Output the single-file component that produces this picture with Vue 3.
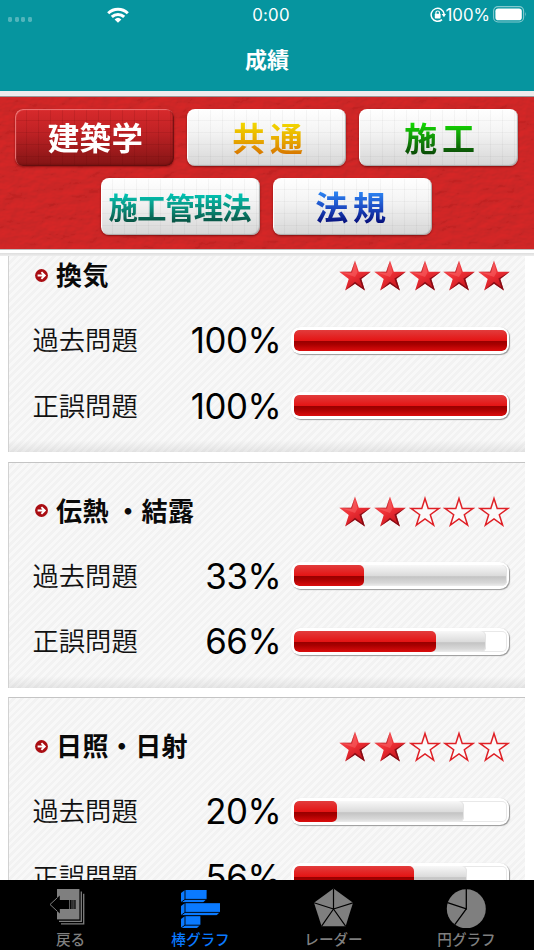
<script setup>
import { ref } from 'vue'

const subjects = ref([
  [
    { id: 1, name: '建築学', color: 'red' },
    { id: 2, name: '共通', color: 'yellow' },
    { id: 3, name: '施工', color: 'green' }
  ],
  [
    { id: 4, name: '施工管理法', color: 'teal' },
    { id: 5, name: '法規', color: 'blue' }
  ]
])

const cards = ref([
  {
    name: '換気',
    stars: 5,
    rows: [
      { label: '過去問題', rate: 100, done: 100 },
      { label: '正誤問題', rate: 100, done: 100 }
    ]
  },
  {
    name: '伝熱 ・結露',
    stars: 2,
    rows: [
      { label: '過去問題', rate: 33, done: 100 },
      { label: '正誤問題', rate: 66.5, done: 90.2 }
    ]
  },
  {
    name: '日照・日射',
    stars: 2,
    rows: [
      { label: '過去問題', rate: 20, done: 80 },
      { label: '正誤問題', rate: 56.2, done: 81.3 }
    ]
  }
])

const tabs = ref([
  { id: 'back', name: '戻る' },
  { id: 'bar', name: '棒グラフ' },
  { id: 'radar', name: 'レーダー' },
  { id: 'pie', name: '円グラフ' }
])
const activeTab = ref('bar')
const activeSubject = ref(1)

const starPath = 'M16 0.4 L19.8 11.7 L31.8 11.7 L22.3 19 L25.9 30.6 L16 23.8 L6.1 30.6 L9.7 19 L0.2 11.7 L12.2 11.7 Z'
</script>

<template>
  <div class="screen">
    <header class="header">
      <div class="status">
        <div class="status-left">
          <span class="dots"><i></i><i></i><i></i><i></i></span>
          <svg class="wifi" width="22" height="16" viewBox="0 0 22 16">
            <g fill="none" stroke="#fff" stroke-width="3">
              <path d="M1.2 6.2 A14 14 0 0 1 20.8 6.2" />
              <path d="M4.8 9.9 A9 9 0 0 1 17.2 9.9" />
            </g>
            <path d="M7.6 12.4 A5 5 0 0 1 14.4 12.4 L11 15.8 Z" fill="#fff" />
          </svg>
        </div>
        <span class="time">0:00</span>
        <div class="status-right">
          <svg width="16" height="16" viewBox="0 0 16 16">
            <path d="M12 12.6 A6.5 6.5 0 1 1 14.1 7" fill="none" stroke="#fff" stroke-width="1.5" />
            <path d="M11.6 7 H16 L14 10.2 Z" fill="#fff" />
            <rect x="4.8" y="6.8" width="5.8" height="4.6" rx="0.6" fill="#fff" />
            <path d="M5.9 7.2 V5.8 a1.8 1.8 0 0 1 3.6 0 V7.2" fill="none" stroke="#fff" stroke-width="1.2" />
          </svg>
          <span class="battery-text">100%</span>
          <svg width="34" height="17" viewBox="0 0 34 17">
            <rect x="0.6" y="0.6" width="30" height="15.4" rx="4.4" fill="none" stroke="#fff" stroke-opacity="0.5" stroke-width="1.1" />
            <rect x="2.4" y="2.4" width="26.4" height="11.8" rx="2.8" fill="#fff" />
            <path d="M32 5.8 Q33.6 8.3 32 10.8 Z" fill="#fff" fill-opacity="0.55" />
          </svg>
        </div>
      </div>
      <h1 class="title">成績</h1>
    </header>

    <section class="subjects">
      <svg class="paper" width="534" height="152">
        <filter id="paper" x="0" y="0" width="100%" height="100%">
          <feTurbulence type="fractalNoise" baseFrequency="0.06 0.1" numOctaves="4" seed="8" result="noise" />
          <feDiffuseLighting in="noise" lighting-color="#cf2527" surfaceScale="1" diffuseConstant="1.14">
            <feDistantLight azimuth="235" elevation="60" />
          </feDiffuseLighting>
        </filter>
        <rect width="534" height="152" filter="url(#paper)" />
      </svg>
      <div v-for="(line, index) in subjects" :key="index" class="subject-line">
        <button
          v-for="subject in line"
          :key="subject.id"
          class="subject"
          :class="[subject.color, subject.id === activeSubject ? 'active' : '']"
          @click="activeSubject = subject.id"
        >
          <span>{{ subject.name }}</span>
        </button>
      </div>
    </section>
    <div class="divider"></div>

    <main class="list">
      <article v-for="card in cards" :key="card.name" class="card">
        <div class="card-head">
          <svg class="bullet" width="13" height="13" viewBox="0 0 13 13">
            <circle cx="6.5" cy="6.5" r="6.4" fill="#a90d12" />
            <path d="M2.6 6.5 H9.4 M6.4 3.1 L9.8 6.5 L6.4 9.9" fill="none" stroke="#fff" stroke-width="1.9" />
          </svg>
          <h2>{{ card.name }}</h2>
          <div class="stars">
            <svg v-for="n in 5" :key="n" width="32" height="31" viewBox="0 0 32 31">
              <template v-if="n <= card.stars">
                <path :d="starPath" fill="url(#star)" />
                <path d="M31.8 11.7 L22.3 19 L25.9 30.6 L16 23.8 L6.1 30.6 L16 21.8 L23.4 27.6 L20.4 18.4 Z" fill="#6e0710" fill-opacity="0.75" />
                <path d="M16 0.4 L12.8 12.6 L0.2 11.7 L12.2 11.7 Z" fill="#8c1a1f" fill-opacity="0.6" />
                <path d="M16 3 L18.6 12.6 L16 17 L4 12.8 L13.2 12.8 Z" fill="#ff8080" fill-opacity="0.35" />
              </template>
              <path v-else d="M16 2.4 L19.2 12.4 L30 12.4 L21.3 18.7 L24.6 29 L16 22.8 L7.4 29 L10.7 18.7 L2 12.4 L12.8 12.4 Z" fill="#fafafa" stroke="#df2026" stroke-width="1.5" />
            </svg>
          </div>
        </div>
        <div v-for="row in card.rows" :key="row.label" class="row">
          <span class="label">{{ row.label }}</span>
          <span class="rate">{{ Math.floor(row.rate) }}%</span>
          <div class="bar">
            <div class="track">
              <div class="done" :style="{ width: row.done + '%' }"></div>
              <div class="fill" :style="{ width: row.rate + '%' }"></div>
            </div>
          </div>
        </div>
      </article>
    </main>

    <nav class="tabs">
      <button
        v-for="tab in tabs"
        :key="tab.id"
        class="tab"
        :class="['tab-' + tab.id, tab.id === activeTab ? 'active-tab' : '']"
        @click="activeTab = tab.id"
      >
        <svg v-if="tab.id === 'back'" width="40" height="40" viewBox="0 0 40 40">
          <path d="M10 1 H32.4 V31.4 H10 Z" fill="currentColor" />
          <path d="M3 16.5 L12.8 7.6 V12 H28.6 V21 H12.8 V25.4 Z" fill="#000" />
          <path d="M10 10 L3 16.5 L10 23" fill="none" stroke="currentColor" />
          <path d="M22.6 12 V21 M25 12 V21 M26.9 12 V21" stroke="currentColor" stroke-width="0.8" />
          <path d="M12 33.3 H34.3 V3.4 M14 35.8 H36.7 V5.8" fill="none" stroke="currentColor" stroke-width="1.3" />
        </svg>
        <svg v-if="tab.id === 'bar'" width="40" height="40" viewBox="0 0 40 40">
          <g fill="currentColor">
            <path d="M1 5 L5 2 H26.6 V11 L23 14.4 H1 Z" />
            <path d="M1 18 L5 15 H40 V24 L36.4 27.4 H1 Z" />
            <path d="M1 31 L5 28 H20.4 V36.8 L17 40 H1 Z" />
          </g>
          <g fill="none" stroke="#000" stroke-width="0.9">
            <path d="M5 2 V11.4 H26.6 M5 11.4 L1 14.4" />
            <path d="M1 14.7 H40 M1 27.7 H40" />
            <path d="M5 15 V24.4 H40 M5 24.4 L1 27.4" />
            <path d="M5 28 V37.2 H20.4 M5 37.2 L1 40" />
          </g>
        </svg>
        <svg v-if="tab.id === 'radar'" width="40" height="40" viewBox="0 0 40 40">
          <path d="M20.5 0.6 L40 14.8 L32.6 38.2 H8.6 L1 14.8 Z" fill="currentColor" />
          <path d="M20.5 0.6 V21 L40 14.8 M20.5 21 L32.6 38.2 M20.5 21 L8.6 38.2 M20.5 21 L1 14.8" fill="none" stroke="#000" stroke-width="1.2" />
        </svg>
        <svg v-if="tab.id === 'pie'" width="40" height="40" viewBox="0 0 40 40">
          <circle cx="20.3" cy="20.8" r="19.5" fill="currentColor" />
          <path d="M20.3 1 V20.8 L1.5 14.6 M20.3 20.8 L8.8 36.6" fill="none" stroke="#000" stroke-width="1.3" />
        </svg>
        <span>{{ tab.name }}</span>
      </button>
    </nav>

    <svg class="defs" width="0" height="0">
      <linearGradient id="star" x1="0.2" y1="0" x2="0.8" y2="1">
        <stop offset="0" stop-color="#f0565a" />
        <stop offset="0.45" stop-color="#ee3036" />
        <stop offset="1" stop-color="#c00f18" />
      </linearGradient>
    </svg>
  </div>
</template>

<style>
body {
  margin: 0;
  overflow: hidden;
}
</style>

<style scoped>
.screen {
  position: relative;
  display: flex;
  flex-direction: column;
  width: 534px;
  height: 950px;
  overflow: hidden;
  background: #fff;
  font-family: Inter, 'Noto Sans CJK JP', sans-serif;
}
button {
  margin: 0;
  padding: 0;
  border: none;
  background: none;
  font-family: inherit;
}
.defs {
  position: absolute;
}

/* header */
.header {
  flex: none;
  height: 91px;
  background: #06959f;
  color: #fff;
}
.status {
  display: grid;
  grid-template-columns: 1fr auto 1fr;
  align-items: center;
  height: 29px;
  padding: 0 7px 0 8px;
}
.status-left {
  display: flex;
  align-items: center;
}
.dots {
  display: flex;
  gap: 2.4px;
  margin-top: 10px;
}
.dots i {
  width: 4.2px;
  height: 4.2px;
  border-radius: 1.4px;
  background: rgba(255, 255, 255, 0.3);
}
.wifi {
  margin-left: 75px;
}
.time {
  font-size: 16.8px;
  letter-spacing: 0.2px;
  margin-left: 7px;
}
.status-right {
  display: flex;
  align-items: center;
  justify-content: flex-end;
}
.battery-text {
  font-size: 16.8px;
  margin-right: 3px;
}
.title {
  margin: 15px 0 0;
  text-align: center;
  font-size: 22px;
  line-height: 32px;
  font-weight: 700;
}

/* subject buttons */
.subjects {
  position: relative;
  flex: none;
  box-sizing: border-box;
  height: 152px;
  margin-top: 6px;
  padding: 12px 1px 0 0;
  background: #cc2426;
  box-shadow: 0 -1px 0 #999, 0 -2px 0 #eee, 0 -6px 0 #eeebeb;
}
.paper {
  position: absolute;
  top: 0;
  left: 0;
}
.subject-line {
  position: relative;
  display: flex;
  justify-content: center;
  gap: 13px;
  margin-bottom: 12px;
}
.subject {
  display: flex;
  align-items: center;
  justify-content: center;
  width: 159px;
  height: 57px;
  border-radius: 8px;
  background:
    repeating-linear-gradient(90deg, transparent 0 11px, rgba(0, 0, 0, 0.035) 11px 12px),
    repeating-linear-gradient(180deg, transparent 0 11px, rgba(0, 0, 0, 0.03) 11px 12px),
    linear-gradient(#fff, #f4f4f4 40%, #d6d6d6);
  box-shadow: inset 1px 1px 1px #fff, inset -1px -1px 1px #aaa, 0 1px 2px rgba(80, 0, 0, 0.6);
}
.subject span {
  font-family: 'Noto Sans CJK JP', sans-serif;
  font-size: 33px;
  font-weight: 700;
  line-height: 48px;
  letter-spacing: 4.8px;
  margin: 0 -7px 2px 0;
  color: transparent;
  background-clip: text;
  -webkit-background-clip: text;
}
.active {
  background:
    repeating-linear-gradient(90deg, transparent 0 11px, rgba(80, 0, 0, 0.12) 11px 12px),
    repeating-linear-gradient(180deg, transparent 0 11px, rgba(80, 0, 0, 0.12) 11px 12px),
    linear-gradient(#d82a2c, #c02225 40%, #821414);
  box-shadow: inset 1px 1px 1px #ee7a7a, inset -1px -1px 2px #5e0d0d, 0 1px 2px rgba(80, 0, 0, 0.5);
}
.subject.red span {
  font-size: 31.5px;
  letter-spacing: 0.3px;
  margin: 0 -2px 3px 0;
  background-image: linear-gradient(#fff, #fff);
}
.yellow span {
  background-image: linear-gradient(#f2d800 20%, #e8ac00 55%, #d87800 85%);
}
.green span {
  background-image: linear-gradient(#12dc00 20%, #128c08 55%, #0a4c06 85%);
}
.subject.teal span {
  font-size: 29.5px;
  letter-spacing: -1.1px;
  margin: 0 0 2px -2px;
  background-image: linear-gradient(#00ccbc 20%, #0a8f7c 55%, #085040 85%);
}
.subject.blue span {
  margin: 0 -1px 1px 0;
  background-image: linear-gradient(#2c86f4 20%, #1c48c0 55%, #06107c 85%);
}
.divider {
  position: relative;
  flex: none;
  height: 7px;
  background: linear-gradient(#bbb 0 1px, #fff 1px 3.5px, #ddd 4px, #eee 100%);
}

/* cards */
.list {
  flex: 1;
  min-height: 0;
  overflow: hidden;
  display: flex;
  flex-direction: column;
  gap: 9.5px;
}
.card {
  flex: none;
  box-sizing: border-box;
  width: 517px;
  height: 226px;
  margin-left: 8px;
  padding: 32px 16px 0 23.5px;
  border-top: 1.5px solid #c4c4c4;
  border-left: 1.5px solid #d2d2d2;
  background:
    linear-gradient(transparent 213px, rgba(0, 0, 0, 0.08) 226px),
    repeating-linear-gradient(135deg, #f8f8f8 0 2.7px, #f2f2f2 2.7px 5.4px);
}
.card:first-child {
  margin-top: -30px;
}
.card-head {
  display: flex;
  align-items: center;
  height: 32px;
  margin-bottom: 16.5px;
}
.bullet {
  margin: 0 8.5px 0 2px;
}
h2 {
  margin: -2px 0 0;
  font-family: 'Noto Sans CJK JP', sans-serif;
  font-size: 26px;
  line-height: 32px;
  letter-spacing: 0.4px;
  font-weight: 700;
  color: #0a0a0a;
  white-space: pre;
}
.stars {
  display: flex;
  gap: 2.7px;
  margin: 1px -1px 0 auto;
}
.row {
  display: flex;
  align-items: center;
  height: 65.4px;
}
.label {
  width: 105px;
  margin-top: -2px;
  font-size: 26.3px;
  font-family: 'Noto Sans CJK JP', sans-serif;
  font-weight: 350;
  line-height: 40px;
  color: #111;
  white-space: nowrap;
}
.rate {
  width: 143.8px;
  text-align: right;
  font-size: 34.8px;
  letter-spacing: -0.4px;
  line-height: 40px;
  color: #000;
}
.bar {
  box-sizing: border-box;
  width: 218px;
  height: 27px;
  margin-left: auto;
  padding: 3px 2px 3px 3px;
  border-radius: 9px;
  background: #fff;
  box-shadow: 1px 1px 1px #999, 0 0 1px #ddd;
}
.track {
  position: relative;
  height: 21px;
  border-radius: 5px;
  overflow: hidden;
  background: #fff;
  box-shadow: inset 0 0 0 1px #e8e8e8;
}
.done,
.fill {
  position: absolute;
  top: 0;
  left: 0;
  height: 21px;
  border-radius: 5px;
}
.done {
  background: linear-gradient(#f8f8f8, #dcdcdc 50%, #c4c4c4 56%, #d8d8d8 85%, #ececec);
  box-shadow: inset -1px 0 0 #e4e4e4;
}
.fill {
  background: linear-gradient(#e23c3c, #e41414 51%, #980000 54%, #a80000 68%, #dc0c0c);
}

/* tab bar */
.tabs {
  flex: none;
  display: flex;
  height: 70px;
  background: #000;
}
.tab {
  width: 133px;
  display: flex;
  flex-direction: column;
  align-items: center;
  padding-top: 8px;
  color: #7f7f7f;
  font-size: 14.6px;
  font-weight: 500;
}
.tab span {
  font-family: 'Noto Sans CJK JP', sans-serif;
  line-height: 21px;
  padding-left: 2px;
}
.tab-back span {
  padding-left: 8px;
}
.active-tab {
  color: #0a7aff;
}
</style>
